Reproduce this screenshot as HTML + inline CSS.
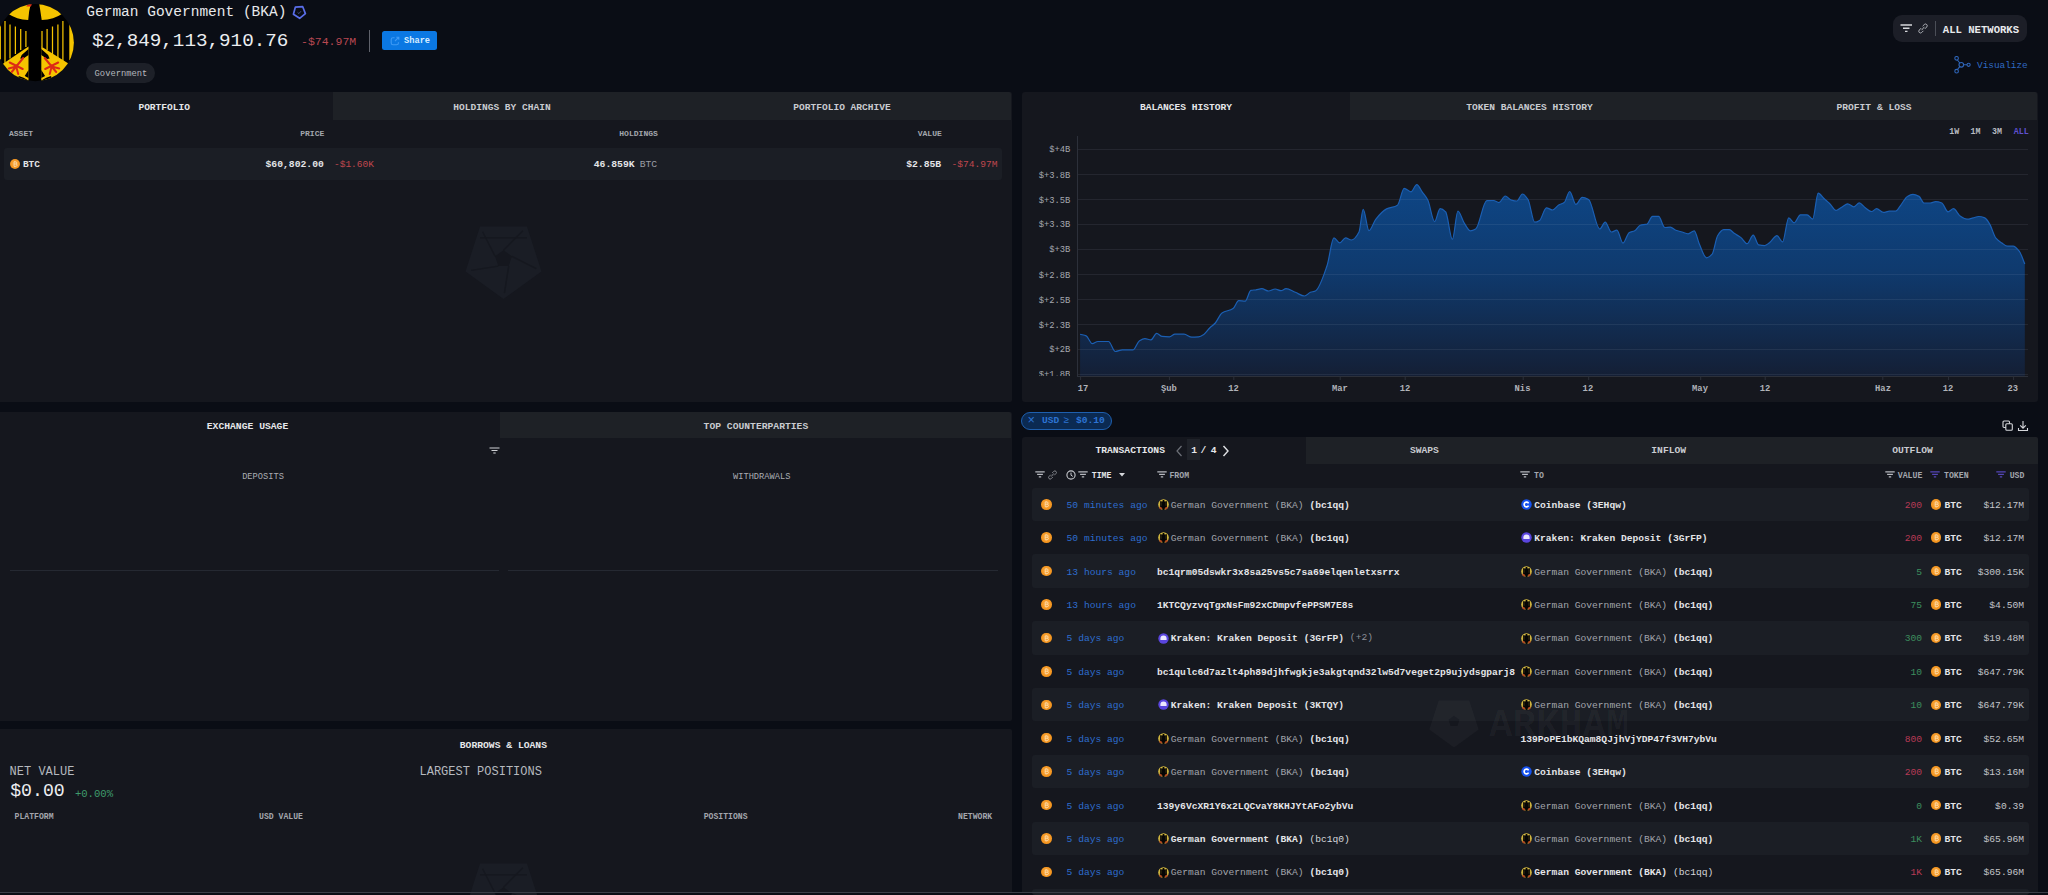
<!DOCTYPE html>
<html><head><meta charset="utf-8"><title>German Government (BKA)</title>
<style>
html,body{margin:0;padding:0}
body{width:2048px;height:895px;background:#0a0d15;overflow:hidden;position:relative;font-family:"Liberation Mono",monospace;-webkit-font-smoothing:antialiased}
.a{position:absolute;white-space:nowrap}
b{font-weight:700}
.w{color:#e4e5e8}
.g{color:#a3a6ad;font-weight:400}
.g3{color:#d6d8dc;font-weight:400}
.g2{color:#8d9098;font-weight:400;position:relative;top:-1.5px}
.btc{border-radius:50%;background:radial-gradient(circle at 50% 45%,#f9ad48 0,#f4951f 62%,#d97f10 100%)}
.btc svg{position:absolute;left:0;top:0;width:100%;height:100%}
.ic{display:inline-block;width:10.5px;height:10.5px;border-radius:50%}
.gov{background:radial-gradient(circle at 50% 55%,#000 0,#000 38%,#e8c21a 42%,#e0b000 70%,#2a2000 100%)}
.cb{background:#1552ef;box-shadow:inset 0 0 0 2px #1552ef, inset 0 0 0 4px #fff}
.kr{background:radial-gradient(circle at 50% 40%,#e8e4ff 0,#d9d2ff 30%,#5b45e0 48%,#4a36c8 100%)}
</style></head>
<body>
<svg class="a" style="left:0px;top:0px" width="80" height="90" viewBox="0 0 80 90">
<defs><clipPath id="lc"><circle cx="36.6" cy="42.7" r="38.6"/></clipPath></defs>
<g transform="translate(-1.3,0)"><g clip-path="url(#lc)">
<rect x="-5" y="0" width="90" height="90" fill="#000"/>
<path d="M9 13.5 Q18 19.5 29.5 20 L30.5 11 L32 4.5 L31.5 0 L-5 0 Z" fill="#f5c400"/>
<path d="M64 13.5 Q55 19.5 43 20 L41.5 10 L40.5 4 L40 0 L80 0 Z" fill="#f5c400"/>
<path d="M-5 0 L9 0 L9 13.5 Q4 10 -5 8 Z" fill="#000"/>
<path d="M80 0 L64 0 L64 13.5 Q70 10 80 8 Z" fill="#000"/>
<path d="M-5 22 L2.2 24 L2.2 60 L-5 64 Z" fill="#f5c400"/>
<path d="M80 22 L70.6 24 L70.6 60 L80 64 Z" fill="#f5c400"/>
<path d="M-5 70 L29.8 46.5 L29.8 90 L-5 90 Z" fill="#f5c400"/>
<path d="M80 70 L42.6 46.5 L42.6 90 L80 90 Z" fill="#f5c400"/>
<path d="M29.8 49 L23 55 L21.5 58.5 L24 59 L29.8 55 Z M42.6 49 L49.4 55 L50.9 58.5 L48.4 59 L42.6 55 Z M20 76 Q25 77 29.8 80.5 L29.8 90 L18 90 Z M52.4 76 Q47.4 77 42.6 80.5 L42.6 90 L54.4 90 Z M29.8 70 L26 76 L29.8 78 Z M42.6 70 L46.4 76 L42.6 78 Z" fill="#000"/>
<g stroke="#f5c400" stroke-width="1.25">
<line x1="6.3" y1="21" x2="6.3" y2="63"/><line x1="11.3" y1="24.5" x2="11.3" y2="58.5"/><line x1="16.7" y1="26.5" x2="16.7" y2="54"/><line x1="22" y1="29" x2="22" y2="50"/><line x1="27.2" y1="31" x2="27.2" y2="47"/>
<line x1="43.3" y1="31" x2="43.3" y2="47"/><line x1="48.4" y1="29" x2="48.4" y2="50"/><line x1="53.8" y1="26.5" x2="53.8" y2="54"/><line x1="59.2" y1="24.5" x2="59.2" y2="58.5"/><line x1="64.2" y1="21" x2="64.2" y2="63"/>
</g>
<path d="M27.5 6.5 Q29 3.5 33.5 4 L32 6.5 Z" fill="#e0281a"/>
<g stroke="#dc2a16" stroke-width="2" stroke-linecap="round" fill="none">
<path d="M24.5 58 L17.5 66.5 M11 62.5 L24 69 M17.5 66.5 L13 72 M17.5 66.5 L19.5 74 M17.5 66.5 L10 68.5"/>
<path d="M46 58 L53 66.5 M59.5 62.5 L46.5 69 M53 66.5 L57.5 72 M53 66.5 L51 74 M53 66.5 L60.5 68.5"/>
</g>
</g>
</g>
</svg>
<div class="a" style="top:4.57px;font-size:14.5px;line-height:14.5px;color:#e8e9ec;left:86.30px;">German Government (BKA)</div>
<svg class="a" style="left:292px;top:5px" width="15" height="15" viewBox="0 0 15 15">
<path d="M3.34,2.10 L10.73,1.72 L13.39,8.63 L7.63,13.29 L1.42,9.26 Z" fill="none" stroke="#5a6eea" stroke-width="1.7" stroke-linejoin="round"/>
<path d="M5.6 7.4 L6.9 8.6 L9 6.2" fill="none" stroke="#4b5390" stroke-width="0.9"/>
</svg>
<div class="a" style="top:32.39px;font-size:19.25px;line-height:19.25px;color:#eceef1;left:92.00px;">$2,849,113,910.76</div>
<div class="a" style="top:36.48px;font-size:11.5px;line-height:11.5px;color:#b94852;left:301.00px;">-$74.97M</div>
<div class="a" style="left:369px;top:30px;width:1.40px;height:21.70px;background:#5f626b;"></div>
<div class="a" style="left:382px;top:31.2px;width:54.60px;height:18.50px;background:#0b78e3;border-radius:2.5px;"></div>
<svg class="a" style="left:389.5px;top:35.5px" width="10" height="10" viewBox="0 0 10 10">
<path d="M4.6 1.8 H3 Q1.2 1.8 1.2 3.6 V7 Q1.2 8.8 3 8.8 H6.6 Q8.4 8.8 8.4 7 V6.2" fill="none" stroke="#3f9af5" stroke-width="1.1"/>
<path d="M5 5 L8.6 1.4 M6.3 1.2 H8.8 V3.7" fill="none" stroke="#3f9af5" stroke-width="1.1"/>
</svg>
<div class="a" style="top:36.80px;font-size:8.7px;line-height:8.7px;color:#d6ecff;font-weight:700;left:404.00px;">Share</div>
<div class="a" style="left:86.4px;top:63.3px;width:68.60px;height:19.30px;background:#1d2028;border-radius:10px;"></div>
<div class="a" style="top:69.56px;font-size:8.8px;line-height:8.8px;color:#b5b8be;left:94.60px;">Government</div>
<div class="a" style="left:1893px;top:15.4px;width:134.00px;height:26.20px;background:#1c1e27;border-radius:9px;"></div>
<svg class="a" style="left:1900px;top:24px" width="13" height="9" viewBox="0 0 13 9">
<path d="M0.5 1 H12 M3 4.2 H9.5 M5 7.4 H7.5" stroke="#d6d8dc" stroke-width="1.4"/>
</svg>
<svg class="a" style="left:1918px;top:23px" width="10" height="11" viewBox="0 0 10 11">
<path d="M4.6 3.2 L6.3 1.5 Q7.6 0.4 8.8 1.6 Q9.8 2.8 8.7 4 L6.8 5.9 M5.4 7.8 L3.7 9.5 Q2.4 10.6 1.2 9.4 Q0.2 8.2 1.3 7 L3.2 5.1 M3.6 7.2 L6.4 3.8" fill="none" stroke="#aeb1b7" stroke-width="1"/>
</svg>
<div class="a" style="left:1935px;top:21px;width:1.00px;height:15.00px;background:#4b4e57;"></div>
<div class="a" style="top:24.87px;font-size:10.6px;line-height:10.6px;color:#e9eaed;font-weight:700;left:1942.80px;">ALL NETWORKS</div>
<svg class="a" style="left:1954px;top:56px" width="18" height="18" viewBox="0 0 18 18">
<g fill="none" stroke="#2f65b8" stroke-width="1.1">
<circle cx="2.6" cy="2.3" r="1.8"/><circle cx="2.6" cy="15.2" r="1.8"/><circle cx="7.3" cy="8.8" r="2.3"/><circle cx="14.6" cy="8.8" r="1.6"/>
<path d="M3.4 4 L5.8 7 M3.4 13.5 L5.8 10.6 M9.6 8.8 H13"/>
</g></svg>
<div class="a" style="top:61.19px;font-size:9.4px;line-height:9.4px;color:#2f6ac4;left:1977.00px;">Visualize</div>
<div class="a" style="left:0px;top:92px;width:1011.50px;height:310.00px;background:#15171e;border-radius:0 2px 2px 0;"></div>
<div class="a" style="left:332.6px;top:92px;width:678.90px;height:28.00px;background:#1e2126;border-radius:0 2px 0 0;"></div>
<div class="a" style="top:103.03px;font-size:9.55px;line-height:9.55px;color:#e6e7ea;font-weight:700;left:164.20px;transform:translateX(-50%);">PORTFOLIO</div>
<div class="a" style="top:103.03px;font-size:9.55px;line-height:9.55px;color:#c9cbd0;font-weight:700;left:502.00px;transform:translateX(-50%);">HOLDINGS BY CHAIN</div>
<div class="a" style="top:103.03px;font-size:9.55px;line-height:9.55px;color:#c9cbd0;font-weight:700;left:842.00px;transform:translateX(-50%);">PORTFOLIO ARCHIVE</div>
<div class="a" style="top:129.68px;font-size:8.05px;line-height:8.05px;color:#a3a6ad;font-weight:700;left:8.90px;">ASSET</div>
<div class="a" style="top:129.68px;font-size:8.05px;line-height:8.05px;color:#a3a6ad;font-weight:700;right:1723.70px;">PRICE</div>
<div class="a" style="top:129.68px;font-size:8.05px;line-height:8.05px;color:#a3a6ad;font-weight:700;right:1390.10px;">HOLDINGS</div>
<div class="a" style="top:129.68px;font-size:8.05px;line-height:8.05px;color:#a3a6ad;font-weight:700;right:1106.20px;">VALUE</div>
<div class="a" style="left:4px;top:148px;width:998.00px;height:31.70px;background:#1b1e25;border-radius:3px;"></div>
<div class="a btc" style="left:9.5px;top:158.7px;width:10px;height:10px"><svg viewBox="0 0 10 10"><path d="M4 2.9 H5.7 Q6.8 2.9 6.8 4 Q6.8 4.9 5.9 5 Q7.1 5.1 7.1 6.2 Q7.1 7.3 5.8 7.3 H4 Z M4 5 H5.8 M4.9 2.1 V2.9 M4.9 7.3 V8.1" fill="none" stroke="#ffe6c0" stroke-width="0.9" opacity="0.75"/></svg></div>
<div class="a" style="top:159.67px;font-size:9.45px;line-height:9.45px;color:#e4e5e8;font-weight:700;left:22.90px;">BTC</div>
<div class="a" style="top:159.55px;font-size:9.73px;line-height:9.73px;color:#e4e5e8;font-weight:700;right:1724.20px;">$60,802.00</div>
<div class="a" style="top:159.65px;font-size:9.5px;line-height:9.5px;color:#c0474e;left:334.00px;">-$1.60K</div>
<div class="a" style="top:159.55px;font-size:9.73px;line-height:9.73px;color:#e4e5e8;font-weight:700;right:1413.40px;">46.859K</div>
<div class="a" style="top:159.55px;font-size:9.73px;line-height:9.73px;color:#9a9da4;right:1390.80px;">BTC</div>
<div class="a" style="top:159.55px;font-size:9.73px;line-height:9.73px;color:#e4e5e8;font-weight:700;right:1106.80px;">$2.85B</div>
<div class="a" style="top:159.63px;font-size:9.55px;line-height:9.55px;color:#c0474e;right:1050.60px;">-$74.97M</div>
<svg class="a" style="left:0;top:0;" width="2048" height="895" viewBox="0 0 2048 895"><path d="M480.0,226.6 L527.0,226.6 L541.5,271.4 L503.5,299.0 L465.5,271.4 Z M503.5,250.2 L511.9,256.3 L508.7,266.1 L498.3,266.1 L495.1,256.3 Z" fill="#1a1d25" fill-rule="evenodd"/><path d="M503.5,250.2 L522.9,230.8 M511.9,256.3 L536.3,268.7 M508.7,266.1 L504.4,293.2 M498.3,266.1 L471.2,270.4 M495.1,256.3 L482.6,231.8 " stroke="#15171e" stroke-width="1.4" opacity="0.8"/><path d="M480.0,237.8 H527.0" stroke="#15171e" stroke-width="1.4" opacity="0.8"/></svg>
<div class="a" style="left:0px;top:411.8px;width:1011.50px;height:309.00px;background:#15171e;border-radius:0 2px 2px 0;"></div>
<div class="a" style="left:499.7px;top:411.8px;width:511.80px;height:26.70px;background:#1e2126;border-radius:0 2px 0 0;"></div>
<div class="a" style="top:421.96px;font-size:9.7px;line-height:9.7px;color:#e6e7ea;font-weight:700;left:247.50px;transform:translateX(-50%);">EXCHANGE USAGE</div>
<div class="a" style="top:421.96px;font-size:9.7px;line-height:9.7px;color:#c9cbd0;font-weight:700;left:755.90px;transform:translateX(-50%);">TOP COUNTERPARTIES</div>
<svg class="a" style="left:488.5px;top:446.8px" width="11" height="7" viewBox="0 0 11 7">
<path d="M0.5 1 H10.5 M2.5 3.5 H8.5 M4.3 6 H6.7" stroke="#cfd1d5" stroke-width="1.2"/>
</svg>
<div class="a" style="top:472.50px;font-size:8.7px;line-height:8.7px;color:#a9acb2;left:263.00px;transform:translateX(-50%);">DEPOSITS</div>
<div class="a" style="top:472.50px;font-size:8.7px;line-height:8.7px;color:#a9acb2;left:761.70px;transform:translateX(-50%);">WITHDRAWALS</div>
<div class="a" style="left:9.6px;top:570.3px;width:489.40px;height:1.00px;background:#252932;"></div>
<div class="a" style="left:508px;top:570.3px;width:490.00px;height:1.00px;background:#252932;"></div>
<div class="a" style="left:0px;top:729.3px;width:1011.50px;height:162.70px;background:#15171e;border-radius:0 2px 0 0;"></div>
<div class="a" style="top:740.96px;font-size:9.7px;line-height:9.7px;color:#e6e7ea;font-weight:700;left:503.40px;transform:translateX(-50%);">BORROWS &amp; LOANS</div>
<div class="a" style="top:765.86px;font-size:12px;line-height:12px;color:#b6b9bf;left:9.60px;">NET VALUE</div>
<div class="a" style="top:782.25px;font-size:18.2px;line-height:18.2px;color:#eceef1;left:10.20px;">$0.00</div>
<div class="a" style="top:788.77px;font-size:10.6px;line-height:10.6px;color:#3f9c6c;left:74.90px;">+0.00%</div>
<div class="a" style="top:765.86px;font-size:12px;line-height:12px;color:#b6b9bf;left:419.50px;">LARGEST POSITIONS</div>
<div class="a" style="top:813.24px;font-size:8.15px;line-height:8.15px;color:#a3a6ad;font-weight:700;left:14.50px;">PLATFORM</div>
<div class="a" style="top:813.24px;font-size:8.15px;line-height:8.15px;color:#a3a6ad;font-weight:700;left:259.00px;">USD VALUE</div>
<div class="a" style="top:813.24px;font-size:8.15px;line-height:8.15px;color:#a3a6ad;font-weight:700;left:703.70px;">POSITIONS</div>
<div class="a" style="top:813.24px;font-size:8.15px;line-height:8.15px;color:#a3a6ad;font-weight:700;left:958.00px;">NETWORK</div>
<svg class="a" style="left:0;top:0;" width="2048" height="895" viewBox="0 0 2048 895"><path d="M480.0,863.6 L527.0,863.6 L541.5,908.4 L503.5,936.0 L465.5,908.4 Z M503.5,887.2 L511.9,893.3 L508.7,903.1 L498.3,903.1 L495.1,893.3 Z" fill="#1a1d25" fill-rule="evenodd"/><path d="M503.5,887.2 L522.9,867.8 M511.9,893.3 L536.3,905.7 M508.7,903.1 L504.4,930.2 M498.3,903.1 L471.2,907.4 M495.1,893.3 L482.6,868.8 " stroke="#15171e" stroke-width="1.4" opacity="0.8"/><path d="M480.0,874.8 H527.0" stroke="#15171e" stroke-width="1.4" opacity="0.8"/></svg>
<div class="a" style="left:1022px;top:92px;width:1015.50px;height:309.50px;background:#15171e;border-radius:3px;"></div>
<div class="a" style="left:1349.8px;top:92px;width:687.70px;height:28.00px;background:#1e2126;border-radius:0 2px 0 0;"></div>
<div class="a" style="top:103.01px;font-size:9.6px;line-height:9.6px;color:#e6e7ea;font-weight:700;left:1186.00px;transform:translateX(-50%);">BALANCES HISTORY</div>
<div class="a" style="top:103.01px;font-size:9.6px;line-height:9.6px;color:#c9cbd0;font-weight:700;left:1529.50px;transform:translateX(-50%);">TOKEN BALANCES HISTORY</div>
<div class="a" style="top:103.01px;font-size:9.6px;line-height:9.6px;color:#c9cbd0;font-weight:700;left:1874.00px;transform:translateX(-50%);">PROFIT &amp; LOSS</div>
<div class="a" style="top:128.37px;font-size:8.3px;line-height:8.3px;color:#b9bcc2;font-weight:700;left:1949.30px;">1W</div>
<div class="a" style="top:128.37px;font-size:8.3px;line-height:8.3px;color:#b9bcc2;font-weight:700;left:1970.60px;">1M</div>
<div class="a" style="top:128.37px;font-size:8.3px;line-height:8.3px;color:#b9bcc2;font-weight:700;left:1992.00px;">3M</div>
<div class="a" style="top:128.37px;font-size:8.3px;line-height:8.3px;color:#5f50cf;font-weight:700;left:2013.80px;">ALL</div>
<svg class="a" style="left:1022px;top:120px" width="1016" height="282" viewBox="1022 120 1016 282">
<defs><linearGradient id="gf" x1="0" y1="184" x2="0" y2="376" gradientUnits="userSpaceOnUse">
<stop offset="0" stop-color="#0e4686"/><stop offset="0.45" stop-color="#0f3a6e"/><stop offset="1" stop-color="#141f35"/></linearGradient></defs>
<path d="M1080.1,334.2 C1082.1,334.8 1084.2,335.0 1086.2,335.9 C1088.2,336.8 1090.3,343.7 1092.3,343.7 C1094.2,343.7 1096.0,341.5 1097.9,341.5 C1101.4,341.5 1105.0,341.5 1108.5,341.5 C1110.8,341.5 1113.0,351.5 1115.3,351.5 C1117.7,351.5 1120.1,349.8 1122.5,349.8 C1126.0,349.8 1129.6,349.8 1133.1,349.8 C1135.2,349.8 1137.2,342.2 1139.3,340.9 C1141.2,339.8 1143.0,338.7 1144.9,338.7 C1146.9,338.7 1149.0,339.8 1151.0,339.8 C1152.9,339.8 1154.7,333.4 1156.6,333.4 C1158.5,333.4 1160.3,336.2 1162.2,336.4 C1164.6,336.7 1167.0,336.8 1169.4,336.8 C1171.3,336.8 1173.1,334.2 1175.0,334.2 C1178.0,334.2 1181.0,334.2 1184.0,334.2 C1186.6,334.2 1189.2,337.2 1191.8,337.2 C1194.0,337.2 1196.3,337.0 1198.5,336.8 C1200.4,336.6 1202.2,335.4 1204.1,334.2 C1206.0,333.0 1207.8,329.8 1209.7,328.0 C1211.6,326.2 1213.4,325.1 1215.3,323.0 C1217.5,320.5 1219.8,314.5 1222.0,313.0 C1225.7,310.5 1229.4,311.0 1233.1,308.5 C1235.0,307.3 1236.8,300.7 1238.7,300.7 C1240.9,300.7 1243.0,301.1 1245.2,301.1 C1247.1,301.1 1249.0,290.7 1250.9,290.3 C1252.6,290.0 1254.2,290.0 1255.9,289.8 C1257.9,289.5 1259.8,288.7 1261.8,288.7 C1264.0,288.7 1266.3,291.0 1268.5,291.0 C1270.7,291.0 1273.0,289.0 1275.2,289.0 C1277.1,289.0 1279.1,290.7 1281.0,290.7 C1282.7,290.7 1284.3,288.7 1286.0,288.7 C1289.1,288.7 1292.2,291.1 1295.3,292.3 C1298.4,293.5 1301.4,296.0 1304.5,296.0 C1306.5,296.0 1308.4,293.0 1310.4,292.3 C1312.1,291.7 1313.7,291.7 1315.4,291.0 C1319.3,289.4 1323.2,276.9 1327.1,265.5 C1329.4,258.9 1331.6,237.9 1333.9,237.9 C1335.8,237.9 1337.8,242.9 1339.7,242.9 C1341.7,242.9 1343.6,237.9 1345.6,237.9 C1347.5,237.9 1349.5,240.0 1351.4,240.0 C1353.9,240.0 1356.5,236.8 1359.0,232.0 C1360.4,229.4 1361.8,209.4 1363.2,209.4 C1365.1,209.4 1367.1,230.7 1369.0,230.7 C1371.2,230.7 1373.5,222.2 1375.7,219.4 C1379.3,214.8 1383.0,210.7 1386.6,208.9 C1390.2,207.1 1393.9,207.5 1397.5,205.2 C1399.7,203.8 1402.0,188.4 1404.2,188.4 C1406.4,188.4 1408.7,191.8 1410.9,191.8 C1412.9,191.8 1414.8,184.6 1416.8,184.6 C1418.6,184.6 1420.5,189.5 1422.3,192.1 C1424.1,194.7 1426.0,196.5 1427.8,200.1 C1430.1,204.6 1432.3,221.6 1434.6,221.6 C1436.4,221.6 1438.3,208.7 1440.1,208.7 C1441.9,208.7 1443.8,210.0 1445.6,211.8 C1447.9,214.0 1450.1,239.4 1452.4,239.4 C1454.2,239.4 1456.1,211.2 1457.9,211.2 C1460.0,211.2 1462.0,219.6 1464.1,222.8 C1466.1,225.9 1468.2,230.8 1470.2,230.8 C1472.0,230.8 1473.9,230.0 1475.7,229.0 C1479.4,227.0 1483.1,200.9 1486.8,200.7 C1489.0,200.6 1491.3,200.5 1493.5,200.5 C1495.3,200.5 1497.2,202.6 1499.0,202.6 C1501.1,202.6 1503.1,196.0 1505.2,196.0 C1507.3,196.0 1509.3,199.6 1511.4,200.1 C1513.2,200.6 1515.1,201.0 1516.9,201.0 C1518.7,201.0 1520.6,194.0 1522.4,194.0 C1524.3,194.0 1526.1,196.7 1528.0,199.5 C1530.2,202.8 1532.5,222.2 1534.7,222.2 C1536.3,222.2 1538.0,221.4 1539.6,220.4 C1541.9,219.1 1544.1,207.8 1546.4,207.8 C1548.4,207.8 1550.5,210.0 1552.5,210.0 C1554.6,210.0 1556.6,206.2 1558.7,205.0 C1560.5,204.0 1562.4,203.9 1564.2,202.6 C1566.0,201.3 1567.9,191.5 1569.7,191.5 C1571.8,191.5 1573.8,204.4 1575.9,204.4 C1578.0,204.4 1580.1,197.3 1582.2,197.3 C1584.3,197.3 1586.5,198.3 1588.6,199.5 C1592.3,201.6 1596.0,229.0 1599.7,229.0 C1601.5,229.0 1603.4,222.2 1605.2,222.2 C1607.2,222.2 1609.3,232.0 1611.3,232.0 C1613.2,232.0 1615.0,230.2 1616.9,230.2 C1618.9,230.2 1621.0,243.1 1623.0,243.1 C1625.0,243.1 1627.1,233.8 1629.1,232.7 C1631.0,231.7 1632.8,231.7 1634.7,230.8 C1636.5,229.9 1638.4,225.9 1640.2,225.3 C1642.5,224.6 1644.7,224.8 1647.0,224.1 C1648.8,223.5 1650.7,216.4 1652.5,216.4 C1654.5,216.4 1656.6,216.4 1658.6,216.4 C1660.7,216.4 1662.7,227.5 1664.8,227.5 C1666.6,227.5 1668.5,227.1 1670.3,227.1 C1672.1,227.1 1674.0,229.5 1675.8,230.2 C1677.9,231.0 1679.9,231.4 1682.0,232.0 C1684.0,232.6 1686.1,233.9 1688.1,233.9 C1690.2,233.9 1692.2,230.8 1694.3,230.8 C1695.9,230.8 1697.6,240.0 1699.2,243.7 C1701.6,249.2 1704.1,257.8 1706.5,257.8 C1708.4,257.8 1710.2,256.2 1712.1,254.2 C1713.9,252.2 1715.8,238.6 1717.6,235.7 C1719.6,232.5 1721.7,229.6 1723.7,229.6 C1725.6,229.6 1727.4,229.6 1729.3,229.6 C1730.9,229.6 1732.6,232.2 1734.2,233.3 C1736.5,234.9 1738.7,235.8 1741.0,237.6 C1743.0,239.2 1745.1,243.7 1747.1,243.7 C1749.1,243.7 1751.2,235.1 1753.2,235.1 C1755.0,235.1 1756.8,244.5 1758.6,244.9 C1760.6,245.3 1762.7,245.6 1764.7,245.6 C1766.4,245.6 1768.0,243.7 1769.7,242.5 C1772.1,240.7 1774.6,235.7 1777.0,235.7 C1778.9,235.7 1780.7,241.9 1782.6,241.9 C1784.6,241.9 1786.7,217.9 1788.7,217.9 C1790.5,217.9 1792.4,222.8 1794.2,222.8 C1796.3,222.8 1798.3,214.8 1800.4,214.8 C1802.6,214.8 1804.9,214.8 1807.1,214.8 C1809.0,214.8 1810.8,219.1 1812.7,219.1 C1814.5,219.1 1816.4,193.1 1818.2,193.1 C1820.0,193.1 1821.9,196.6 1823.7,198.3 C1825.8,200.2 1827.8,201.8 1829.9,203.8 C1831.9,205.8 1834.0,210.5 1836.0,210.5 C1838.0,210.5 1840.1,208.1 1842.1,206.9 C1844.0,205.8 1845.8,203.8 1847.7,203.8 C1849.7,203.8 1851.8,206.9 1853.8,206.9 C1855.6,206.9 1857.5,202.9 1859.3,202.9 C1861.2,202.9 1863.0,206.2 1864.9,207.5 C1867.1,209.1 1869.4,211.5 1871.6,211.5 C1873.3,211.5 1874.9,208.7 1876.6,208.7 C1878.8,208.7 1881.1,212.4 1883.3,212.4 C1885.4,212.4 1887.4,211.2 1889.5,211.2 C1891.5,211.2 1893.6,211.2 1895.6,211.2 C1897.2,211.2 1898.9,207.6 1900.5,205.6 C1902.8,202.8 1905.1,197.7 1907.4,196.4 C1909.2,195.3 1911.1,194.3 1912.9,194.3 C1914.9,194.3 1917.0,195.3 1919.0,196.4 C1920.7,197.3 1922.3,203.0 1924.0,203.0 C1926.0,203.0 1928.1,203.0 1930.1,203.0 C1931.9,203.0 1933.8,201.7 1935.6,201.7 C1937.7,201.7 1939.7,202.2 1941.8,203.0 C1943.9,203.8 1945.9,211.8 1948.0,211.8 C1949.8,211.8 1951.7,208.7 1953.5,208.7 C1955.7,208.7 1958.0,214.7 1960.2,216.1 C1962.5,217.6 1964.7,219.2 1967.0,219.2 C1969.0,219.2 1971.1,218.4 1973.1,217.9 C1975.0,217.5 1976.8,216.5 1978.7,216.5 C1980.7,216.5 1982.8,217.1 1984.8,217.9 C1986.4,218.6 1988.1,221.5 1989.7,224.1 C1991.8,227.4 1993.8,235.7 1995.9,238.2 C1997.9,240.6 2000.0,241.8 2002.0,243.1 C2003.8,244.3 2005.7,246.2 2007.5,246.2 C2009.4,246.2 2011.2,246.2 2013.1,246.2 C2015.1,246.2 2017.2,248.7 2019.2,251.1 C2021.1,253.3 2022.9,259.7 2024.8,264.0 L2024.8,376 L1080.1,376 Z" fill="url(#gf)"/>
<g stroke="rgba(190,200,220,0.09)" stroke-width="1"><line x1="1077" y1="149.5" x2="2028" y2="149.5"/><line x1="1077" y1="174.5" x2="2028" y2="174.5"/><line x1="1077" y1="199.5" x2="2028" y2="199.5"/><line x1="1077" y1="224.5" x2="2028" y2="224.5"/><line x1="1077" y1="249.5" x2="2028" y2="249.5"/><line x1="1077" y1="274.5" x2="2028" y2="274.5"/><line x1="1077" y1="299.5" x2="2028" y2="299.5"/><line x1="1077" y1="324.5" x2="2028" y2="324.5"/><line x1="1077" y1="349.5" x2="2028" y2="349.5"/><line x1="1077" y1="374.5" x2="2028" y2="374.5"/></g>
<path d="M1080.1,334.2 C1082.1,334.8 1084.2,335.0 1086.2,335.9 C1088.2,336.8 1090.3,343.7 1092.3,343.7 C1094.2,343.7 1096.0,341.5 1097.9,341.5 C1101.4,341.5 1105.0,341.5 1108.5,341.5 C1110.8,341.5 1113.0,351.5 1115.3,351.5 C1117.7,351.5 1120.1,349.8 1122.5,349.8 C1126.0,349.8 1129.6,349.8 1133.1,349.8 C1135.2,349.8 1137.2,342.2 1139.3,340.9 C1141.2,339.8 1143.0,338.7 1144.9,338.7 C1146.9,338.7 1149.0,339.8 1151.0,339.8 C1152.9,339.8 1154.7,333.4 1156.6,333.4 C1158.5,333.4 1160.3,336.2 1162.2,336.4 C1164.6,336.7 1167.0,336.8 1169.4,336.8 C1171.3,336.8 1173.1,334.2 1175.0,334.2 C1178.0,334.2 1181.0,334.2 1184.0,334.2 C1186.6,334.2 1189.2,337.2 1191.8,337.2 C1194.0,337.2 1196.3,337.0 1198.5,336.8 C1200.4,336.6 1202.2,335.4 1204.1,334.2 C1206.0,333.0 1207.8,329.8 1209.7,328.0 C1211.6,326.2 1213.4,325.1 1215.3,323.0 C1217.5,320.5 1219.8,314.5 1222.0,313.0 C1225.7,310.5 1229.4,311.0 1233.1,308.5 C1235.0,307.3 1236.8,300.7 1238.7,300.7 C1240.9,300.7 1243.0,301.1 1245.2,301.1 C1247.1,301.1 1249.0,290.7 1250.9,290.3 C1252.6,290.0 1254.2,290.0 1255.9,289.8 C1257.9,289.5 1259.8,288.7 1261.8,288.7 C1264.0,288.7 1266.3,291.0 1268.5,291.0 C1270.7,291.0 1273.0,289.0 1275.2,289.0 C1277.1,289.0 1279.1,290.7 1281.0,290.7 C1282.7,290.7 1284.3,288.7 1286.0,288.7 C1289.1,288.7 1292.2,291.1 1295.3,292.3 C1298.4,293.5 1301.4,296.0 1304.5,296.0 C1306.5,296.0 1308.4,293.0 1310.4,292.3 C1312.1,291.7 1313.7,291.7 1315.4,291.0 C1319.3,289.4 1323.2,276.9 1327.1,265.5 C1329.4,258.9 1331.6,237.9 1333.9,237.9 C1335.8,237.9 1337.8,242.9 1339.7,242.9 C1341.7,242.9 1343.6,237.9 1345.6,237.9 C1347.5,237.9 1349.5,240.0 1351.4,240.0 C1353.9,240.0 1356.5,236.8 1359.0,232.0 C1360.4,229.4 1361.8,209.4 1363.2,209.4 C1365.1,209.4 1367.1,230.7 1369.0,230.7 C1371.2,230.7 1373.5,222.2 1375.7,219.4 C1379.3,214.8 1383.0,210.7 1386.6,208.9 C1390.2,207.1 1393.9,207.5 1397.5,205.2 C1399.7,203.8 1402.0,188.4 1404.2,188.4 C1406.4,188.4 1408.7,191.8 1410.9,191.8 C1412.9,191.8 1414.8,184.6 1416.8,184.6 C1418.6,184.6 1420.5,189.5 1422.3,192.1 C1424.1,194.7 1426.0,196.5 1427.8,200.1 C1430.1,204.6 1432.3,221.6 1434.6,221.6 C1436.4,221.6 1438.3,208.7 1440.1,208.7 C1441.9,208.7 1443.8,210.0 1445.6,211.8 C1447.9,214.0 1450.1,239.4 1452.4,239.4 C1454.2,239.4 1456.1,211.2 1457.9,211.2 C1460.0,211.2 1462.0,219.6 1464.1,222.8 C1466.1,225.9 1468.2,230.8 1470.2,230.8 C1472.0,230.8 1473.9,230.0 1475.7,229.0 C1479.4,227.0 1483.1,200.9 1486.8,200.7 C1489.0,200.6 1491.3,200.5 1493.5,200.5 C1495.3,200.5 1497.2,202.6 1499.0,202.6 C1501.1,202.6 1503.1,196.0 1505.2,196.0 C1507.3,196.0 1509.3,199.6 1511.4,200.1 C1513.2,200.6 1515.1,201.0 1516.9,201.0 C1518.7,201.0 1520.6,194.0 1522.4,194.0 C1524.3,194.0 1526.1,196.7 1528.0,199.5 C1530.2,202.8 1532.5,222.2 1534.7,222.2 C1536.3,222.2 1538.0,221.4 1539.6,220.4 C1541.9,219.1 1544.1,207.8 1546.4,207.8 C1548.4,207.8 1550.5,210.0 1552.5,210.0 C1554.6,210.0 1556.6,206.2 1558.7,205.0 C1560.5,204.0 1562.4,203.9 1564.2,202.6 C1566.0,201.3 1567.9,191.5 1569.7,191.5 C1571.8,191.5 1573.8,204.4 1575.9,204.4 C1578.0,204.4 1580.1,197.3 1582.2,197.3 C1584.3,197.3 1586.5,198.3 1588.6,199.5 C1592.3,201.6 1596.0,229.0 1599.7,229.0 C1601.5,229.0 1603.4,222.2 1605.2,222.2 C1607.2,222.2 1609.3,232.0 1611.3,232.0 C1613.2,232.0 1615.0,230.2 1616.9,230.2 C1618.9,230.2 1621.0,243.1 1623.0,243.1 C1625.0,243.1 1627.1,233.8 1629.1,232.7 C1631.0,231.7 1632.8,231.7 1634.7,230.8 C1636.5,229.9 1638.4,225.9 1640.2,225.3 C1642.5,224.6 1644.7,224.8 1647.0,224.1 C1648.8,223.5 1650.7,216.4 1652.5,216.4 C1654.5,216.4 1656.6,216.4 1658.6,216.4 C1660.7,216.4 1662.7,227.5 1664.8,227.5 C1666.6,227.5 1668.5,227.1 1670.3,227.1 C1672.1,227.1 1674.0,229.5 1675.8,230.2 C1677.9,231.0 1679.9,231.4 1682.0,232.0 C1684.0,232.6 1686.1,233.9 1688.1,233.9 C1690.2,233.9 1692.2,230.8 1694.3,230.8 C1695.9,230.8 1697.6,240.0 1699.2,243.7 C1701.6,249.2 1704.1,257.8 1706.5,257.8 C1708.4,257.8 1710.2,256.2 1712.1,254.2 C1713.9,252.2 1715.8,238.6 1717.6,235.7 C1719.6,232.5 1721.7,229.6 1723.7,229.6 C1725.6,229.6 1727.4,229.6 1729.3,229.6 C1730.9,229.6 1732.6,232.2 1734.2,233.3 C1736.5,234.9 1738.7,235.8 1741.0,237.6 C1743.0,239.2 1745.1,243.7 1747.1,243.7 C1749.1,243.7 1751.2,235.1 1753.2,235.1 C1755.0,235.1 1756.8,244.5 1758.6,244.9 C1760.6,245.3 1762.7,245.6 1764.7,245.6 C1766.4,245.6 1768.0,243.7 1769.7,242.5 C1772.1,240.7 1774.6,235.7 1777.0,235.7 C1778.9,235.7 1780.7,241.9 1782.6,241.9 C1784.6,241.9 1786.7,217.9 1788.7,217.9 C1790.5,217.9 1792.4,222.8 1794.2,222.8 C1796.3,222.8 1798.3,214.8 1800.4,214.8 C1802.6,214.8 1804.9,214.8 1807.1,214.8 C1809.0,214.8 1810.8,219.1 1812.7,219.1 C1814.5,219.1 1816.4,193.1 1818.2,193.1 C1820.0,193.1 1821.9,196.6 1823.7,198.3 C1825.8,200.2 1827.8,201.8 1829.9,203.8 C1831.9,205.8 1834.0,210.5 1836.0,210.5 C1838.0,210.5 1840.1,208.1 1842.1,206.9 C1844.0,205.8 1845.8,203.8 1847.7,203.8 C1849.7,203.8 1851.8,206.9 1853.8,206.9 C1855.6,206.9 1857.5,202.9 1859.3,202.9 C1861.2,202.9 1863.0,206.2 1864.9,207.5 C1867.1,209.1 1869.4,211.5 1871.6,211.5 C1873.3,211.5 1874.9,208.7 1876.6,208.7 C1878.8,208.7 1881.1,212.4 1883.3,212.4 C1885.4,212.4 1887.4,211.2 1889.5,211.2 C1891.5,211.2 1893.6,211.2 1895.6,211.2 C1897.2,211.2 1898.9,207.6 1900.5,205.6 C1902.8,202.8 1905.1,197.7 1907.4,196.4 C1909.2,195.3 1911.1,194.3 1912.9,194.3 C1914.9,194.3 1917.0,195.3 1919.0,196.4 C1920.7,197.3 1922.3,203.0 1924.0,203.0 C1926.0,203.0 1928.1,203.0 1930.1,203.0 C1931.9,203.0 1933.8,201.7 1935.6,201.7 C1937.7,201.7 1939.7,202.2 1941.8,203.0 C1943.9,203.8 1945.9,211.8 1948.0,211.8 C1949.8,211.8 1951.7,208.7 1953.5,208.7 C1955.7,208.7 1958.0,214.7 1960.2,216.1 C1962.5,217.6 1964.7,219.2 1967.0,219.2 C1969.0,219.2 1971.1,218.4 1973.1,217.9 C1975.0,217.5 1976.8,216.5 1978.7,216.5 C1980.7,216.5 1982.8,217.1 1984.8,217.9 C1986.4,218.6 1988.1,221.5 1989.7,224.1 C1991.8,227.4 1993.8,235.7 1995.9,238.2 C1997.9,240.6 2000.0,241.8 2002.0,243.1 C2003.8,244.3 2005.7,246.2 2007.5,246.2 C2009.4,246.2 2011.2,246.2 2013.1,246.2 C2015.1,246.2 2017.2,248.7 2019.2,251.1 C2021.1,253.3 2022.9,259.7 2024.8,264.0" fill="none" stroke="#1b5fb3" stroke-width="1.2" stroke-linejoin="round"/>
<g stroke="#2c303a" stroke-width="1"><line x1="1077.5" y1="136" x2="1077.5" y2="376.5"/><line x1="1077" y1="376.5" x2="2028" y2="376.5"/><line x1="1080.6" y1="376" x2="1080.6" y2="380"/><line x1="1169.4" y1="376" x2="1169.4" y2="380"/><line x1="1233.8" y1="376" x2="1233.8" y2="380"/><line x1="1340.2" y1="376" x2="1340.2" y2="380"/><line x1="1405.2" y1="376" x2="1405.2" y2="380"/><line x1="1523.2" y1="376" x2="1523.2" y2="380"/><line x1="1588.7" y1="376" x2="1588.7" y2="380"/><line x1="1700.7" y1="376" x2="1700.7" y2="380"/><line x1="1765.2" y1="376" x2="1765.2" y2="380"/><line x1="1882.8" y1="376" x2="1882.8" y2="380"/><line x1="1948.6" y1="376" x2="1948.6" y2="380"/><line x1="2013.6" y1="376" x2="2013.6" y2="380"/></g>
</svg>
<div class="a" style="top:146.46px;font-size:8.8px;line-height:8.8px;color:#a4a7ae;right:977.70px;">$+4B</div>
<div class="a" style="top:171.56px;font-size:8.8px;line-height:8.8px;color:#a4a7ae;right:977.70px;">$+3.8B</div>
<div class="a" style="top:196.56px;font-size:8.8px;line-height:8.8px;color:#a4a7ae;right:977.70px;">$+3.5B</div>
<div class="a" style="top:221.46px;font-size:8.8px;line-height:8.8px;color:#a4a7ae;right:977.70px;">$+3.3B</div>
<div class="a" style="top:246.36px;font-size:8.8px;line-height:8.8px;color:#a4a7ae;right:977.70px;">$+3B</div>
<div class="a" style="top:271.56px;font-size:8.8px;line-height:8.8px;color:#a4a7ae;right:977.70px;">$+2.8B</div>
<div class="a" style="top:296.76px;font-size:8.8px;line-height:8.8px;color:#a4a7ae;right:977.70px;">$+2.5B</div>
<div class="a" style="top:321.66px;font-size:8.8px;line-height:8.8px;color:#a4a7ae;right:977.70px;">$+2.3B</div>
<div class="a" style="top:345.96px;font-size:8.8px;line-height:8.8px;color:#a4a7ae;right:977.70px;">$+2B</div>
<div class="a" style="top:370.56px;font-size:8.8px;line-height:8.8px;color:#a4a7ae;right:977.70px;height:5.3px;overflow:hidden;">$+1.8B</div>
<div class="a" style="top:384.76px;font-size:8.8px;line-height:8.8px;color:#b0b3b9;font-weight:700;left:1083.00px;transform:translateX(-50%);">17</div>
<div class="a" style="top:384.76px;font-size:8.8px;line-height:8.8px;color:#b0b3b9;font-weight:700;left:1168.90px;transform:translateX(-50%);">Şub</div>
<div class="a" style="top:384.76px;font-size:8.8px;line-height:8.8px;color:#b0b3b9;font-weight:700;left:1233.50px;transform:translateX(-50%);">12</div>
<div class="a" style="top:384.76px;font-size:8.8px;line-height:8.8px;color:#b0b3b9;font-weight:700;left:1339.90px;transform:translateX(-50%);">Mar</div>
<div class="a" style="top:384.76px;font-size:8.8px;line-height:8.8px;color:#b0b3b9;font-weight:700;left:1405.00px;transform:translateX(-50%);">12</div>
<div class="a" style="top:384.76px;font-size:8.8px;line-height:8.8px;color:#b0b3b9;font-weight:700;left:1522.50px;transform:translateX(-50%);">Nis</div>
<div class="a" style="top:384.76px;font-size:8.8px;line-height:8.8px;color:#b0b3b9;font-weight:700;left:1587.90px;transform:translateX(-50%);">12</div>
<div class="a" style="top:384.76px;font-size:8.8px;line-height:8.8px;color:#b0b3b9;font-weight:700;left:1700.00px;transform:translateX(-50%);">May</div>
<div class="a" style="top:384.76px;font-size:8.8px;line-height:8.8px;color:#b0b3b9;font-weight:700;left:1765.00px;transform:translateX(-50%);">12</div>
<div class="a" style="top:384.76px;font-size:8.8px;line-height:8.8px;color:#b0b3b9;font-weight:700;left:1883.00px;transform:translateX(-50%);">Haz</div>
<div class="a" style="top:384.76px;font-size:8.8px;line-height:8.8px;color:#b0b3b9;font-weight:700;left:1948.00px;transform:translateX(-50%);">12</div>
<div class="a" style="top:384.76px;font-size:8.8px;line-height:8.8px;color:#b0b3b9;font-weight:700;left:2012.80px;transform:translateX(-50%);">23</div>
<div class="a" style="left:1021px;top:411.5px;width:90.50px;height:18.00px;background:#0b2a52;border:1.3px solid #1e5fae;border-radius:9px;box-sizing:border-box;"></div>
<div class="a" style="top:415.14px;font-size:12.5px;line-height:12.5px;color:#2d74d4;left:1027.50px;">×</div>
<div class="a" style="top:416.41px;font-size:9.6px;line-height:9.6px;color:#2d74d4;font-weight:700;left:1042.00px;">USD</div>
<div class="a" style="top:416.41px;font-size:9.6px;line-height:9.6px;color:#2d74d4;left:1063.50px;">≥</div>
<div class="a" style="top:416.41px;font-size:9.6px;line-height:9.6px;color:#2d74d4;font-weight:700;left:1076.00px;">$0.10</div>
<svg class="a" style="left:2001.5px;top:419.5px" width="28" height="13" viewBox="0 0 28 13">
<g fill="none" stroke="#d5d7db" stroke-width="1.1">
<rect x="1" y="1" width="6.5" height="6.5" rx="1"/><rect x="3.8" y="3.8" width="6.5" height="6.5" rx="1" fill="#0a0d15"/>
<path d="M21 1 V8 M18.2 5.3 L21 8.1 L23.8 5.3 M16.5 8 V10.5 H25.5 V8"/>
</g></svg>
<div class="a" style="left:1022px;top:436.5px;width:1015.50px;height:455.50px;background:#15171e;border-radius:3px 3px 0 0;"></div>
<div class="a" style="left:1306px;top:436.5px;width:731.50px;height:27.50px;background:#1e2126;border-radius:0 2px 0 0;"></div>
<div class="a" style="top:446.28px;font-size:9.67px;line-height:9.67px;color:#e6e7ea;font-weight:700;left:1095.40px;">TRANSACTIONS</div>
<div class="a" style="left:1187px;top:438.8px;width:13.00px;height:21.20px;background:#1f2229;"></div>
<svg class="a" style="left:1175px;top:445px" width="56" height="12" viewBox="0 0 56 12">
<path d="M6.5 1 L2 6 L6.5 11" fill="none" stroke="#6d7078" stroke-width="1.2"/>
<path d="M48.5 1 L53 6 L48.5 11" fill="none" stroke="#dfe1e4" stroke-width="1.4"/>
</svg>
<div class="a" style="top:446.28px;font-size:9.67px;line-height:9.67px;color:#e6e7ea;font-weight:700;left:1191.20px;">1</div>
<div class="a" style="top:446.28px;font-size:9.67px;line-height:9.67px;color:#e6e7ea;font-weight:700;left:1200.50px;">/</div>
<div class="a" style="top:446.28px;font-size:9.67px;line-height:9.67px;color:#e6e7ea;font-weight:700;left:1210.80px;">4</div>
<div class="a" style="top:446.28px;font-size:9.67px;line-height:9.67px;color:#c9cbd0;font-weight:700;left:1424.40px;transform:translateX(-50%);">SWAPS</div>
<div class="a" style="top:446.28px;font-size:9.67px;line-height:9.67px;color:#c9cbd0;font-weight:700;left:1668.70px;transform:translateX(-50%);">INFLOW</div>
<div class="a" style="top:446.28px;font-size:9.67px;line-height:9.67px;color:#c9cbd0;font-weight:700;left:1912.50px;transform:translateX(-50%);">OUTFLOW</div>
<svg class="a" style="left:1035.2px;top:471.2px" width="10" height="7" viewBox="0 0 10 7"><path d="M0.3 0.8 H9.7 M2.1 3.3 H7.9 M3.8 5.8 H6.2" stroke="#b6b9bf" stroke-width="1.3"/></svg>
<svg class="a" style="left:1047.5px;top:470px" width="9" height="10" viewBox="0 0 9 10"><path d="M4.2 2.9 L5.7 1.4 Q6.9 0.3 8 1.4 Q9 2.5 7.9 3.6 L6.2 5.3 M4.8 7.1 L3.3 8.6 Q2.1 9.7 1 8.6 Q0 7.5 1.1 6.4 L2.8 4.7 M3.2 6.6 L5.8 3.4" fill="none" stroke="#8f9299" stroke-width="0.9"/></svg>
<svg class="a" style="left:1065.8px;top:470px" width="10" height="10" viewBox="0 0 10 10"><circle cx="5" cy="5" r="4.1" fill="none" stroke="#c6c8cd" stroke-width="1.1"/><path d="M5 2.6 V5.2 L6.8 6.4" fill="none" stroke="#c6c8cd" stroke-width="1"/></svg>
<svg class="a" style="left:1078.3px;top:471.2px" width="10" height="7" viewBox="0 0 10 7"><path d="M0.3 0.8 H9.7 M2.1 3.3 H7.9 M3.8 5.8 H6.2" stroke="#b6b9bf" stroke-width="1.3"/></svg>
<div class="a" style="top:472.12px;font-size:8.2px;line-height:8.2px;color:#e6e7ea;font-weight:700;left:1091.80px;">TIME</div>
<svg class="a" style="left:1118.8px;top:473px" width="6" height="4" viewBox="0 0 6 4"><path d="M0 0 H6 L3 3.5 Z" fill="#d6d8dc"/></svg>
<svg class="a" style="left:1156.8px;top:471.2px" width="10" height="7" viewBox="0 0 10 7"><path d="M0.3 0.8 H9.7 M2.1 3.3 H7.9 M3.8 5.8 H6.2" stroke="#b6b9bf" stroke-width="1.3"/></svg>
<div class="a" style="top:472.12px;font-size:8.2px;line-height:8.2px;color:#a3a6ad;font-weight:700;left:1169.40px;">FROM</div>
<svg class="a" style="left:1519.8px;top:471.2px" width="10" height="7" viewBox="0 0 10 7"><path d="M0.3 0.8 H9.7 M2.1 3.3 H7.9 M3.8 5.8 H6.2" stroke="#b6b9bf" stroke-width="1.3"/></svg>
<div class="a" style="top:472.12px;font-size:8.2px;line-height:8.2px;color:#a3a6ad;font-weight:700;left:1534.00px;">TO</div>
<svg class="a" style="left:1884.5px;top:471.2px" width="10" height="7" viewBox="0 0 10 7"><path d="M0.3 0.8 H9.7 M2.1 3.3 H7.9 M3.8 5.8 H6.2" stroke="#b6b9bf" stroke-width="1.3"/></svg>
<div class="a" style="top:472.12px;font-size:8.2px;line-height:8.2px;color:#a3a6ad;font-weight:700;right:125.70px;">VALUE</div>
<svg class="a" style="left:1930.3px;top:471.2px" width="10" height="7" viewBox="0 0 10 7"><path d="M0.3 0.8 H9.7 M2.1 3.3 H7.9 M3.8 5.8 H6.2" stroke="#5446b8" stroke-width="1.3"/></svg>
<div class="a" style="top:472.12px;font-size:8.2px;line-height:8.2px;color:#a3a6ad;font-weight:700;left:1944.00px;">TOKEN</div>
<svg class="a" style="left:1996.1px;top:471.2px" width="10" height="7" viewBox="0 0 10 7"><path d="M0.3 0.8 H9.7 M2.1 3.3 H7.9 M3.8 5.8 H6.2" stroke="#5446b8" stroke-width="1.3"/></svg>
<div class="a" style="top:472.12px;font-size:8.2px;line-height:8.2px;color:#a3a6ad;font-weight:700;right:23.60px;">USD</div>
<div class="a" style="left:1031.5px;top:487.5px;width:997.00px;height:33.42px;background:#1b1e25;border-radius:3px;"></div>
<div class="a btc" style="left:1041.2px;top:499.01px;width:10.5px;height:10.5px"><svg viewBox="0 0 10 10"><path d="M4 2.9 H5.7 Q6.8 2.9 6.8 4 Q6.8 4.9 5.9 5 Q7.1 5.1 7.1 6.2 Q7.1 7.3 5.8 7.3 H4 Z M4 5 H5.8 M4.9 2.1 V2.9 M4.9 7.3 V8.1" fill="none" stroke="#ffe6c0" stroke-width="0.9" opacity="0.75"/></svg></div>
<div class="a" style="top:500.79px;font-size:9.65px;line-height:9.65px;color:#2e6dce;left:1066.60px;">50 minutes ago</div>
<svg class="a" style="left:1157.5px;top:498.91px" width="11" height="11" viewBox="0 0 11 11"><circle cx="5.5" cy="5.5" r="5.3" fill="#d8bc40"/><circle cx="3" cy="8.7" r="1.7" fill="#b04a20"/><circle cx="8" cy="8.7" r="1.7" fill="#b04a20"/><path d="M4.7 1.0 H6.3 L6.5 2.6 L9.0 2.3 L9.1 7.6 L7.0 8.8 L6.4 10.9 H4.6 L4.0 8.8 L1.9 7.6 L2.0 2.3 L4.5 2.6 Z" fill="#050505"/><path d="M3 3.2 V6.8 M8 3.2 V6.8" stroke="#7a6420" stroke-width="0.5"/></svg>
<div class="a" style="top:500.79px;font-size:9.65px;line-height:9.65px;color:#e4e5e8;left:1170.80px;"><span class="g">German Government (BKA)</span> <b class="w">(bc1qq)</b></div>
<svg class="a" style="left:1521.0px;top:498.91px" width="11" height="11" viewBox="0 0 11 11"><circle cx="5.5" cy="5.5" r="5.2" fill="#1652f0"/><path d="M7.6 4.3 A2.4 2.4 0 1 0 7.6 6.7" fill="none" stroke="#fff" stroke-width="1.6"/></svg>
<div class="a" style="top:500.79px;font-size:9.65px;line-height:9.65px;color:#e4e5e8;left:1534.30px;"><b class="w">Coinbase (3EHqw)</b></div>
<div class="a" style="top:500.79px;font-size:9.65px;line-height:9.65px;color:#b83a55;right:126.00px;">200</div>
<div class="a btc" style="left:1930.8px;top:499.01px;width:10.5px;height:10.5px"><svg viewBox="0 0 10 10"><path d="M4 2.9 H5.7 Q6.8 2.9 6.8 4 Q6.8 4.9 5.9 5 Q7.1 5.1 7.1 6.2 Q7.1 7.3 5.8 7.3 H4 Z M4 5 H5.8 M4.9 2.1 V2.9 M4.9 7.3 V8.1" fill="none" stroke="#ffe6c0" stroke-width="0.9" opacity="0.75"/></svg></div>
<div class="a" style="top:500.79px;font-size:9.65px;line-height:9.65px;color:#e4e5e8;font-weight:700;left:1944.40px;">BTC</div>
<div class="a" style="top:500.79px;font-size:9.65px;line-height:9.65px;color:#c4c6cb;right:24.00px;">$12.17M</div>
<div class="a btc" style="left:1041.2px;top:532.43px;width:10.5px;height:10.5px"><svg viewBox="0 0 10 10"><path d="M4 2.9 H5.7 Q6.8 2.9 6.8 4 Q6.8 4.9 5.9 5 Q7.1 5.1 7.1 6.2 Q7.1 7.3 5.8 7.3 H4 Z M4 5 H5.8 M4.9 2.1 V2.9 M4.9 7.3 V8.1" fill="none" stroke="#ffe6c0" stroke-width="0.9" opacity="0.75"/></svg></div>
<div class="a" style="top:534.21px;font-size:9.65px;line-height:9.65px;color:#2e6dce;left:1066.60px;">50 minutes ago</div>
<svg class="a" style="left:1157.5px;top:532.33px" width="11" height="11" viewBox="0 0 11 11"><circle cx="5.5" cy="5.5" r="5.3" fill="#d8bc40"/><circle cx="3" cy="8.7" r="1.7" fill="#b04a20"/><circle cx="8" cy="8.7" r="1.7" fill="#b04a20"/><path d="M4.7 1.0 H6.3 L6.5 2.6 L9.0 2.3 L9.1 7.6 L7.0 8.8 L6.4 10.9 H4.6 L4.0 8.8 L1.9 7.6 L2.0 2.3 L4.5 2.6 Z" fill="#050505"/><path d="M3 3.2 V6.8 M8 3.2 V6.8" stroke="#7a6420" stroke-width="0.5"/></svg>
<div class="a" style="top:534.21px;font-size:9.65px;line-height:9.65px;color:#e4e5e8;left:1170.80px;"><span class="g">German Government (BKA)</span> <b class="w">(bc1qq)</b></div>
<svg class="a" style="left:1521.0px;top:532.33px" width="11" height="11" viewBox="0 0 11 11"><circle cx="5.5" cy="5.5" r="5.2" fill="#5a45de"/><path d="M2.4 7 V5.6 A3.1 3.1 0 0 1 8.6 5.6 V7 Z" fill="#ece8ff"/></svg>
<div class="a" style="top:534.21px;font-size:9.65px;line-height:9.65px;color:#e4e5e8;left:1534.30px;"><b class="w">Kraken: Kraken Deposit (3GrFP)</b></div>
<div class="a" style="top:534.21px;font-size:9.65px;line-height:9.65px;color:#b83a55;right:126.00px;">200</div>
<div class="a btc" style="left:1930.8px;top:532.43px;width:10.5px;height:10.5px"><svg viewBox="0 0 10 10"><path d="M4 2.9 H5.7 Q6.8 2.9 6.8 4 Q6.8 4.9 5.9 5 Q7.1 5.1 7.1 6.2 Q7.1 7.3 5.8 7.3 H4 Z M4 5 H5.8 M4.9 2.1 V2.9 M4.9 7.3 V8.1" fill="none" stroke="#ffe6c0" stroke-width="0.9" opacity="0.75"/></svg></div>
<div class="a" style="top:534.21px;font-size:9.65px;line-height:9.65px;color:#e4e5e8;font-weight:700;left:1944.40px;">BTC</div>
<div class="a" style="top:534.21px;font-size:9.65px;line-height:9.65px;color:#c4c6cb;right:24.00px;">$12.17M</div>
<div class="a" style="left:1031.5px;top:554.34px;width:997.00px;height:33.42px;background:#1b1e25;border-radius:3px;"></div>
<div class="a btc" style="left:1041.2px;top:565.85px;width:10.5px;height:10.5px"><svg viewBox="0 0 10 10"><path d="M4 2.9 H5.7 Q6.8 2.9 6.8 4 Q6.8 4.9 5.9 5 Q7.1 5.1 7.1 6.2 Q7.1 7.3 5.8 7.3 H4 Z M4 5 H5.8 M4.9 2.1 V2.9 M4.9 7.3 V8.1" fill="none" stroke="#ffe6c0" stroke-width="0.9" opacity="0.75"/></svg></div>
<div class="a" style="top:567.63px;font-size:9.65px;line-height:9.65px;color:#2e6dce;left:1066.60px;">13 hours ago</div>
<div class="a" style="top:567.63px;font-size:9.65px;line-height:9.65px;color:#e4e5e8;left:1157.00px;"><b class="w">bc1qrm05dswkr3x8sa25vs5c7sa69elqenletxsrrx</b></div>
<svg class="a" style="left:1521.0px;top:565.75px" width="11" height="11" viewBox="0 0 11 11"><circle cx="5.5" cy="5.5" r="5.3" fill="#d8bc40"/><circle cx="3" cy="8.7" r="1.7" fill="#b04a20"/><circle cx="8" cy="8.7" r="1.7" fill="#b04a20"/><path d="M4.7 1.0 H6.3 L6.5 2.6 L9.0 2.3 L9.1 7.6 L7.0 8.8 L6.4 10.9 H4.6 L4.0 8.8 L1.9 7.6 L2.0 2.3 L4.5 2.6 Z" fill="#050505"/><path d="M3 3.2 V6.8 M8 3.2 V6.8" stroke="#7a6420" stroke-width="0.5"/></svg>
<div class="a" style="top:567.63px;font-size:9.65px;line-height:9.65px;color:#e4e5e8;left:1534.30px;"><span class="g">German Government (BKA)</span> <b class="w">(bc1qq)</b></div>
<div class="a" style="top:567.63px;font-size:9.65px;line-height:9.65px;color:#3d8e5e;right:126.00px;">5</div>
<div class="a btc" style="left:1930.8px;top:565.85px;width:10.5px;height:10.5px"><svg viewBox="0 0 10 10"><path d="M4 2.9 H5.7 Q6.8 2.9 6.8 4 Q6.8 4.9 5.9 5 Q7.1 5.1 7.1 6.2 Q7.1 7.3 5.8 7.3 H4 Z M4 5 H5.8 M4.9 2.1 V2.9 M4.9 7.3 V8.1" fill="none" stroke="#ffe6c0" stroke-width="0.9" opacity="0.75"/></svg></div>
<div class="a" style="top:567.63px;font-size:9.65px;line-height:9.65px;color:#e4e5e8;font-weight:700;left:1944.40px;">BTC</div>
<div class="a" style="top:567.63px;font-size:9.65px;line-height:9.65px;color:#c4c6cb;right:24.00px;">$300.15K</div>
<div class="a btc" style="left:1041.2px;top:599.27px;width:10.5px;height:10.5px"><svg viewBox="0 0 10 10"><path d="M4 2.9 H5.7 Q6.8 2.9 6.8 4 Q6.8 4.9 5.9 5 Q7.1 5.1 7.1 6.2 Q7.1 7.3 5.8 7.3 H4 Z M4 5 H5.8 M4.9 2.1 V2.9 M4.9 7.3 V8.1" fill="none" stroke="#ffe6c0" stroke-width="0.9" opacity="0.75"/></svg></div>
<div class="a" style="top:601.05px;font-size:9.65px;line-height:9.65px;color:#2e6dce;left:1066.60px;">13 hours ago</div>
<div class="a" style="top:601.05px;font-size:9.65px;line-height:9.65px;color:#e4e5e8;left:1157.00px;"><b class="w">1KTCQyzvqTgxNsFm92xCDmpvfePPSM7E8s</b></div>
<svg class="a" style="left:1521.0px;top:599.17px" width="11" height="11" viewBox="0 0 11 11"><circle cx="5.5" cy="5.5" r="5.3" fill="#d8bc40"/><circle cx="3" cy="8.7" r="1.7" fill="#b04a20"/><circle cx="8" cy="8.7" r="1.7" fill="#b04a20"/><path d="M4.7 1.0 H6.3 L6.5 2.6 L9.0 2.3 L9.1 7.6 L7.0 8.8 L6.4 10.9 H4.6 L4.0 8.8 L1.9 7.6 L2.0 2.3 L4.5 2.6 Z" fill="#050505"/><path d="M3 3.2 V6.8 M8 3.2 V6.8" stroke="#7a6420" stroke-width="0.5"/></svg>
<div class="a" style="top:601.05px;font-size:9.65px;line-height:9.65px;color:#e4e5e8;left:1534.30px;"><span class="g">German Government (BKA)</span> <b class="w">(bc1qq)</b></div>
<div class="a" style="top:601.05px;font-size:9.65px;line-height:9.65px;color:#3d8e5e;right:126.00px;">75</div>
<div class="a btc" style="left:1930.8px;top:599.27px;width:10.5px;height:10.5px"><svg viewBox="0 0 10 10"><path d="M4 2.9 H5.7 Q6.8 2.9 6.8 4 Q6.8 4.9 5.9 5 Q7.1 5.1 7.1 6.2 Q7.1 7.3 5.8 7.3 H4 Z M4 5 H5.8 M4.9 2.1 V2.9 M4.9 7.3 V8.1" fill="none" stroke="#ffe6c0" stroke-width="0.9" opacity="0.75"/></svg></div>
<div class="a" style="top:601.05px;font-size:9.65px;line-height:9.65px;color:#e4e5e8;font-weight:700;left:1944.40px;">BTC</div>
<div class="a" style="top:601.05px;font-size:9.65px;line-height:9.65px;color:#c4c6cb;right:24.00px;">$4.50M</div>
<div class="a" style="left:1031.5px;top:621.18px;width:997.00px;height:33.42px;background:#1b1e25;border-radius:3px;"></div>
<div class="a btc" style="left:1041.2px;top:632.69px;width:10.5px;height:10.5px"><svg viewBox="0 0 10 10"><path d="M4 2.9 H5.7 Q6.8 2.9 6.8 4 Q6.8 4.9 5.9 5 Q7.1 5.1 7.1 6.2 Q7.1 7.3 5.8 7.3 H4 Z M4 5 H5.8 M4.9 2.1 V2.9 M4.9 7.3 V8.1" fill="none" stroke="#ffe6c0" stroke-width="0.9" opacity="0.75"/></svg></div>
<div class="a" style="top:634.47px;font-size:9.65px;line-height:9.65px;color:#2e6dce;left:1066.60px;">5 days ago</div>
<svg class="a" style="left:1157.5px;top:632.59px" width="11" height="11" viewBox="0 0 11 11"><circle cx="5.5" cy="5.5" r="5.2" fill="#5a45de"/><path d="M2.4 7 V5.6 A3.1 3.1 0 0 1 8.6 5.6 V7 Z" fill="#ece8ff"/></svg>
<div class="a" style="top:634.47px;font-size:9.65px;line-height:9.65px;color:#e4e5e8;left:1170.80px;"><b class="w">Kraken: Kraken Deposit (3GrFP)</b> <span class="g2">(+2)</span></div>
<svg class="a" style="left:1521.0px;top:632.59px" width="11" height="11" viewBox="0 0 11 11"><circle cx="5.5" cy="5.5" r="5.3" fill="#d8bc40"/><circle cx="3" cy="8.7" r="1.7" fill="#b04a20"/><circle cx="8" cy="8.7" r="1.7" fill="#b04a20"/><path d="M4.7 1.0 H6.3 L6.5 2.6 L9.0 2.3 L9.1 7.6 L7.0 8.8 L6.4 10.9 H4.6 L4.0 8.8 L1.9 7.6 L2.0 2.3 L4.5 2.6 Z" fill="#050505"/><path d="M3 3.2 V6.8 M8 3.2 V6.8" stroke="#7a6420" stroke-width="0.5"/></svg>
<div class="a" style="top:634.47px;font-size:9.65px;line-height:9.65px;color:#e4e5e8;left:1534.30px;"><span class="g">German Government (BKA)</span> <b class="w">(bc1qq)</b></div>
<div class="a" style="top:634.47px;font-size:9.65px;line-height:9.65px;color:#3d8e5e;right:126.00px;">300</div>
<div class="a btc" style="left:1930.8px;top:632.69px;width:10.5px;height:10.5px"><svg viewBox="0 0 10 10"><path d="M4 2.9 H5.7 Q6.8 2.9 6.8 4 Q6.8 4.9 5.9 5 Q7.1 5.1 7.1 6.2 Q7.1 7.3 5.8 7.3 H4 Z M4 5 H5.8 M4.9 2.1 V2.9 M4.9 7.3 V8.1" fill="none" stroke="#ffe6c0" stroke-width="0.9" opacity="0.75"/></svg></div>
<div class="a" style="top:634.47px;font-size:9.65px;line-height:9.65px;color:#e4e5e8;font-weight:700;left:1944.40px;">BTC</div>
<div class="a" style="top:634.47px;font-size:9.65px;line-height:9.65px;color:#c4c6cb;right:24.00px;">$19.48M</div>
<div class="a btc" style="left:1041.2px;top:666.11px;width:10.5px;height:10.5px"><svg viewBox="0 0 10 10"><path d="M4 2.9 H5.7 Q6.8 2.9 6.8 4 Q6.8 4.9 5.9 5 Q7.1 5.1 7.1 6.2 Q7.1 7.3 5.8 7.3 H4 Z M4 5 H5.8 M4.9 2.1 V2.9 M4.9 7.3 V8.1" fill="none" stroke="#ffe6c0" stroke-width="0.9" opacity="0.75"/></svg></div>
<div class="a" style="top:667.89px;font-size:9.65px;line-height:9.65px;color:#2e6dce;left:1066.60px;">5 days ago</div>
<div class="a" style="top:667.89px;font-size:9.65px;line-height:9.65px;color:#e4e5e8;left:1157.00px;"><b class="w">bc1qulc6d7azlt4ph89djhfwgkje3akgtqnd32lw5d7veget2p9ujydsgparj8</b></div>
<svg class="a" style="left:1521.0px;top:666.01px" width="11" height="11" viewBox="0 0 11 11"><circle cx="5.5" cy="5.5" r="5.3" fill="#d8bc40"/><circle cx="3" cy="8.7" r="1.7" fill="#b04a20"/><circle cx="8" cy="8.7" r="1.7" fill="#b04a20"/><path d="M4.7 1.0 H6.3 L6.5 2.6 L9.0 2.3 L9.1 7.6 L7.0 8.8 L6.4 10.9 H4.6 L4.0 8.8 L1.9 7.6 L2.0 2.3 L4.5 2.6 Z" fill="#050505"/><path d="M3 3.2 V6.8 M8 3.2 V6.8" stroke="#7a6420" stroke-width="0.5"/></svg>
<div class="a" style="top:667.89px;font-size:9.65px;line-height:9.65px;color:#e4e5e8;left:1534.30px;"><span class="g">German Government (BKA)</span> <b class="w">(bc1qq)</b></div>
<div class="a" style="top:667.89px;font-size:9.65px;line-height:9.65px;color:#3d8e5e;right:126.00px;">10</div>
<div class="a btc" style="left:1930.8px;top:666.11px;width:10.5px;height:10.5px"><svg viewBox="0 0 10 10"><path d="M4 2.9 H5.7 Q6.8 2.9 6.8 4 Q6.8 4.9 5.9 5 Q7.1 5.1 7.1 6.2 Q7.1 7.3 5.8 7.3 H4 Z M4 5 H5.8 M4.9 2.1 V2.9 M4.9 7.3 V8.1" fill="none" stroke="#ffe6c0" stroke-width="0.9" opacity="0.75"/></svg></div>
<div class="a" style="top:667.89px;font-size:9.65px;line-height:9.65px;color:#e4e5e8;font-weight:700;left:1944.40px;">BTC</div>
<div class="a" style="top:667.89px;font-size:9.65px;line-height:9.65px;color:#c4c6cb;right:24.00px;">$647.79K</div>
<div class="a" style="left:1031.5px;top:688.02px;width:997.00px;height:33.42px;background:#1b1e25;border-radius:3px;"></div>
<div class="a btc" style="left:1041.2px;top:699.53px;width:10.5px;height:10.5px"><svg viewBox="0 0 10 10"><path d="M4 2.9 H5.7 Q6.8 2.9 6.8 4 Q6.8 4.9 5.9 5 Q7.1 5.1 7.1 6.2 Q7.1 7.3 5.8 7.3 H4 Z M4 5 H5.8 M4.9 2.1 V2.9 M4.9 7.3 V8.1" fill="none" stroke="#ffe6c0" stroke-width="0.9" opacity="0.75"/></svg></div>
<div class="a" style="top:701.31px;font-size:9.65px;line-height:9.65px;color:#2e6dce;left:1066.60px;">5 days ago</div>
<svg class="a" style="left:1157.5px;top:699.43px" width="11" height="11" viewBox="0 0 11 11"><circle cx="5.5" cy="5.5" r="5.2" fill="#5a45de"/><path d="M2.4 7 V5.6 A3.1 3.1 0 0 1 8.6 5.6 V7 Z" fill="#ece8ff"/></svg>
<div class="a" style="top:701.31px;font-size:9.65px;line-height:9.65px;color:#e4e5e8;left:1170.80px;"><b class="w">Kraken: Kraken Deposit (3KTQY)</b></div>
<svg class="a" style="left:1521.0px;top:699.43px" width="11" height="11" viewBox="0 0 11 11"><circle cx="5.5" cy="5.5" r="5.3" fill="#d8bc40"/><circle cx="3" cy="8.7" r="1.7" fill="#b04a20"/><circle cx="8" cy="8.7" r="1.7" fill="#b04a20"/><path d="M4.7 1.0 H6.3 L6.5 2.6 L9.0 2.3 L9.1 7.6 L7.0 8.8 L6.4 10.9 H4.6 L4.0 8.8 L1.9 7.6 L2.0 2.3 L4.5 2.6 Z" fill="#050505"/><path d="M3 3.2 V6.8 M8 3.2 V6.8" stroke="#7a6420" stroke-width="0.5"/></svg>
<div class="a" style="top:701.31px;font-size:9.65px;line-height:9.65px;color:#e4e5e8;left:1534.30px;"><span class="g">German Government (BKA)</span> <b class="w">(bc1qq)</b></div>
<div class="a" style="top:701.31px;font-size:9.65px;line-height:9.65px;color:#3d8e5e;right:126.00px;">10</div>
<div class="a btc" style="left:1930.8px;top:699.53px;width:10.5px;height:10.5px"><svg viewBox="0 0 10 10"><path d="M4 2.9 H5.7 Q6.8 2.9 6.8 4 Q6.8 4.9 5.9 5 Q7.1 5.1 7.1 6.2 Q7.1 7.3 5.8 7.3 H4 Z M4 5 H5.8 M4.9 2.1 V2.9 M4.9 7.3 V8.1" fill="none" stroke="#ffe6c0" stroke-width="0.9" opacity="0.75"/></svg></div>
<div class="a" style="top:701.31px;font-size:9.65px;line-height:9.65px;color:#e4e5e8;font-weight:700;left:1944.40px;">BTC</div>
<div class="a" style="top:701.31px;font-size:9.65px;line-height:9.65px;color:#c4c6cb;right:24.00px;">$647.79K</div>
<div class="a btc" style="left:1041.2px;top:732.95px;width:10.5px;height:10.5px"><svg viewBox="0 0 10 10"><path d="M4 2.9 H5.7 Q6.8 2.9 6.8 4 Q6.8 4.9 5.9 5 Q7.1 5.1 7.1 6.2 Q7.1 7.3 5.8 7.3 H4 Z M4 5 H5.8 M4.9 2.1 V2.9 M4.9 7.3 V8.1" fill="none" stroke="#ffe6c0" stroke-width="0.9" opacity="0.75"/></svg></div>
<div class="a" style="top:734.73px;font-size:9.65px;line-height:9.65px;color:#2e6dce;left:1066.60px;">5 days ago</div>
<svg class="a" style="left:1157.5px;top:732.85px" width="11" height="11" viewBox="0 0 11 11"><circle cx="5.5" cy="5.5" r="5.3" fill="#d8bc40"/><circle cx="3" cy="8.7" r="1.7" fill="#b04a20"/><circle cx="8" cy="8.7" r="1.7" fill="#b04a20"/><path d="M4.7 1.0 H6.3 L6.5 2.6 L9.0 2.3 L9.1 7.6 L7.0 8.8 L6.4 10.9 H4.6 L4.0 8.8 L1.9 7.6 L2.0 2.3 L4.5 2.6 Z" fill="#050505"/><path d="M3 3.2 V6.8 M8 3.2 V6.8" stroke="#7a6420" stroke-width="0.5"/></svg>
<div class="a" style="top:734.73px;font-size:9.65px;line-height:9.65px;color:#e4e5e8;left:1170.80px;"><span class="g">German Government (BKA)</span> <b class="w">(bc1qq)</b></div>
<div class="a" style="top:734.73px;font-size:9.65px;line-height:9.65px;color:#e4e5e8;left:1520.50px;"><b class="w">139PoPE1bKQam8QJjhVjYDP47f3VH7ybVu</b></div>
<div class="a" style="top:734.73px;font-size:9.65px;line-height:9.65px;color:#b83a55;right:126.00px;">800</div>
<div class="a btc" style="left:1930.8px;top:732.95px;width:10.5px;height:10.5px"><svg viewBox="0 0 10 10"><path d="M4 2.9 H5.7 Q6.8 2.9 6.8 4 Q6.8 4.9 5.9 5 Q7.1 5.1 7.1 6.2 Q7.1 7.3 5.8 7.3 H4 Z M4 5 H5.8 M4.9 2.1 V2.9 M4.9 7.3 V8.1" fill="none" stroke="#ffe6c0" stroke-width="0.9" opacity="0.75"/></svg></div>
<div class="a" style="top:734.73px;font-size:9.65px;line-height:9.65px;color:#e4e5e8;font-weight:700;left:1944.40px;">BTC</div>
<div class="a" style="top:734.73px;font-size:9.65px;line-height:9.65px;color:#c4c6cb;right:24.00px;">$52.65M</div>
<div class="a" style="left:1031.5px;top:754.86px;width:997.00px;height:33.42px;background:#1b1e25;border-radius:3px;"></div>
<div class="a btc" style="left:1041.2px;top:766.37px;width:10.5px;height:10.5px"><svg viewBox="0 0 10 10"><path d="M4 2.9 H5.7 Q6.8 2.9 6.8 4 Q6.8 4.9 5.9 5 Q7.1 5.1 7.1 6.2 Q7.1 7.3 5.8 7.3 H4 Z M4 5 H5.8 M4.9 2.1 V2.9 M4.9 7.3 V8.1" fill="none" stroke="#ffe6c0" stroke-width="0.9" opacity="0.75"/></svg></div>
<div class="a" style="top:768.15px;font-size:9.65px;line-height:9.65px;color:#2e6dce;left:1066.60px;">5 days ago</div>
<svg class="a" style="left:1157.5px;top:766.27px" width="11" height="11" viewBox="0 0 11 11"><circle cx="5.5" cy="5.5" r="5.3" fill="#d8bc40"/><circle cx="3" cy="8.7" r="1.7" fill="#b04a20"/><circle cx="8" cy="8.7" r="1.7" fill="#b04a20"/><path d="M4.7 1.0 H6.3 L6.5 2.6 L9.0 2.3 L9.1 7.6 L7.0 8.8 L6.4 10.9 H4.6 L4.0 8.8 L1.9 7.6 L2.0 2.3 L4.5 2.6 Z" fill="#050505"/><path d="M3 3.2 V6.8 M8 3.2 V6.8" stroke="#7a6420" stroke-width="0.5"/></svg>
<div class="a" style="top:768.15px;font-size:9.65px;line-height:9.65px;color:#e4e5e8;left:1170.80px;"><span class="g">German Government (BKA)</span> <b class="w">(bc1qq)</b></div>
<svg class="a" style="left:1521.0px;top:766.27px" width="11" height="11" viewBox="0 0 11 11"><circle cx="5.5" cy="5.5" r="5.2" fill="#1652f0"/><path d="M7.6 4.3 A2.4 2.4 0 1 0 7.6 6.7" fill="none" stroke="#fff" stroke-width="1.6"/></svg>
<div class="a" style="top:768.15px;font-size:9.65px;line-height:9.65px;color:#e4e5e8;left:1534.30px;"><b class="w">Coinbase (3EHqw)</b></div>
<div class="a" style="top:768.15px;font-size:9.65px;line-height:9.65px;color:#b83a55;right:126.00px;">200</div>
<div class="a btc" style="left:1930.8px;top:766.37px;width:10.5px;height:10.5px"><svg viewBox="0 0 10 10"><path d="M4 2.9 H5.7 Q6.8 2.9 6.8 4 Q6.8 4.9 5.9 5 Q7.1 5.1 7.1 6.2 Q7.1 7.3 5.8 7.3 H4 Z M4 5 H5.8 M4.9 2.1 V2.9 M4.9 7.3 V8.1" fill="none" stroke="#ffe6c0" stroke-width="0.9" opacity="0.75"/></svg></div>
<div class="a" style="top:768.15px;font-size:9.65px;line-height:9.65px;color:#e4e5e8;font-weight:700;left:1944.40px;">BTC</div>
<div class="a" style="top:768.15px;font-size:9.65px;line-height:9.65px;color:#c4c6cb;right:24.00px;">$13.16M</div>
<div class="a btc" style="left:1041.2px;top:799.79px;width:10.5px;height:10.5px"><svg viewBox="0 0 10 10"><path d="M4 2.9 H5.7 Q6.8 2.9 6.8 4 Q6.8 4.9 5.9 5 Q7.1 5.1 7.1 6.2 Q7.1 7.3 5.8 7.3 H4 Z M4 5 H5.8 M4.9 2.1 V2.9 M4.9 7.3 V8.1" fill="none" stroke="#ffe6c0" stroke-width="0.9" opacity="0.75"/></svg></div>
<div class="a" style="top:801.57px;font-size:9.65px;line-height:9.65px;color:#2e6dce;left:1066.60px;">5 days ago</div>
<div class="a" style="top:801.57px;font-size:9.65px;line-height:9.65px;color:#e4e5e8;left:1157.00px;"><b class="w">139y6VcXR1Y6x2LQCvaY8KHJYtAFo2ybVu</b></div>
<svg class="a" style="left:1521.0px;top:799.69px" width="11" height="11" viewBox="0 0 11 11"><circle cx="5.5" cy="5.5" r="5.3" fill="#d8bc40"/><circle cx="3" cy="8.7" r="1.7" fill="#b04a20"/><circle cx="8" cy="8.7" r="1.7" fill="#b04a20"/><path d="M4.7 1.0 H6.3 L6.5 2.6 L9.0 2.3 L9.1 7.6 L7.0 8.8 L6.4 10.9 H4.6 L4.0 8.8 L1.9 7.6 L2.0 2.3 L4.5 2.6 Z" fill="#050505"/><path d="M3 3.2 V6.8 M8 3.2 V6.8" stroke="#7a6420" stroke-width="0.5"/></svg>
<div class="a" style="top:801.57px;font-size:9.65px;line-height:9.65px;color:#e4e5e8;left:1534.30px;"><span class="g">German Government (BKA)</span> <b class="w">(bc1qq)</b></div>
<div class="a" style="top:801.57px;font-size:9.65px;line-height:9.65px;color:#3d8e5e;right:126.00px;">0</div>
<div class="a btc" style="left:1930.8px;top:799.79px;width:10.5px;height:10.5px"><svg viewBox="0 0 10 10"><path d="M4 2.9 H5.7 Q6.8 2.9 6.8 4 Q6.8 4.9 5.9 5 Q7.1 5.1 7.1 6.2 Q7.1 7.3 5.8 7.3 H4 Z M4 5 H5.8 M4.9 2.1 V2.9 M4.9 7.3 V8.1" fill="none" stroke="#ffe6c0" stroke-width="0.9" opacity="0.75"/></svg></div>
<div class="a" style="top:801.57px;font-size:9.65px;line-height:9.65px;color:#e4e5e8;font-weight:700;left:1944.40px;">BTC</div>
<div class="a" style="top:801.57px;font-size:9.65px;line-height:9.65px;color:#c4c6cb;right:24.00px;">$0.39</div>
<div class="a" style="left:1031.5px;top:821.7px;width:997.00px;height:33.42px;background:#1b1e25;border-radius:3px;"></div>
<div class="a btc" style="left:1041.2px;top:833.21px;width:10.5px;height:10.5px"><svg viewBox="0 0 10 10"><path d="M4 2.9 H5.7 Q6.8 2.9 6.8 4 Q6.8 4.9 5.9 5 Q7.1 5.1 7.1 6.2 Q7.1 7.3 5.8 7.3 H4 Z M4 5 H5.8 M4.9 2.1 V2.9 M4.9 7.3 V8.1" fill="none" stroke="#ffe6c0" stroke-width="0.9" opacity="0.75"/></svg></div>
<div class="a" style="top:834.99px;font-size:9.65px;line-height:9.65px;color:#2e6dce;left:1066.60px;">5 days ago</div>
<svg class="a" style="left:1157.5px;top:833.11px" width="11" height="11" viewBox="0 0 11 11"><circle cx="5.5" cy="5.5" r="5.3" fill="#d8bc40"/><circle cx="3" cy="8.7" r="1.7" fill="#b04a20"/><circle cx="8" cy="8.7" r="1.7" fill="#b04a20"/><path d="M4.7 1.0 H6.3 L6.5 2.6 L9.0 2.3 L9.1 7.6 L7.0 8.8 L6.4 10.9 H4.6 L4.0 8.8 L1.9 7.6 L2.0 2.3 L4.5 2.6 Z" fill="#050505"/><path d="M3 3.2 V6.8 M8 3.2 V6.8" stroke="#7a6420" stroke-width="0.5"/></svg>
<div class="a" style="top:834.99px;font-size:9.65px;line-height:9.65px;color:#e4e5e8;left:1170.80px;"><b class="w">German Government (BKA)</b> <span class="g3">(bc1q0)</span></div>
<svg class="a" style="left:1521.0px;top:833.11px" width="11" height="11" viewBox="0 0 11 11"><circle cx="5.5" cy="5.5" r="5.3" fill="#d8bc40"/><circle cx="3" cy="8.7" r="1.7" fill="#b04a20"/><circle cx="8" cy="8.7" r="1.7" fill="#b04a20"/><path d="M4.7 1.0 H6.3 L6.5 2.6 L9.0 2.3 L9.1 7.6 L7.0 8.8 L6.4 10.9 H4.6 L4.0 8.8 L1.9 7.6 L2.0 2.3 L4.5 2.6 Z" fill="#050505"/><path d="M3 3.2 V6.8 M8 3.2 V6.8" stroke="#7a6420" stroke-width="0.5"/></svg>
<div class="a" style="top:834.99px;font-size:9.65px;line-height:9.65px;color:#e4e5e8;left:1534.30px;"><span class="g">German Government (BKA)</span> <b class="w">(bc1qq)</b></div>
<div class="a" style="top:834.99px;font-size:9.65px;line-height:9.65px;color:#3d8e5e;right:126.00px;">1K</div>
<div class="a btc" style="left:1930.8px;top:833.21px;width:10.5px;height:10.5px"><svg viewBox="0 0 10 10"><path d="M4 2.9 H5.7 Q6.8 2.9 6.8 4 Q6.8 4.9 5.9 5 Q7.1 5.1 7.1 6.2 Q7.1 7.3 5.8 7.3 H4 Z M4 5 H5.8 M4.9 2.1 V2.9 M4.9 7.3 V8.1" fill="none" stroke="#ffe6c0" stroke-width="0.9" opacity="0.75"/></svg></div>
<div class="a" style="top:834.99px;font-size:9.65px;line-height:9.65px;color:#e4e5e8;font-weight:700;left:1944.40px;">BTC</div>
<div class="a" style="top:834.99px;font-size:9.65px;line-height:9.65px;color:#c4c6cb;right:24.00px;">$65.96M</div>
<div class="a btc" style="left:1041.2px;top:866.63px;width:10.5px;height:10.5px"><svg viewBox="0 0 10 10"><path d="M4 2.9 H5.7 Q6.8 2.9 6.8 4 Q6.8 4.9 5.9 5 Q7.1 5.1 7.1 6.2 Q7.1 7.3 5.8 7.3 H4 Z M4 5 H5.8 M4.9 2.1 V2.9 M4.9 7.3 V8.1" fill="none" stroke="#ffe6c0" stroke-width="0.9" opacity="0.75"/></svg></div>
<div class="a" style="top:868.41px;font-size:9.65px;line-height:9.65px;color:#2e6dce;left:1066.60px;">5 days ago</div>
<svg class="a" style="left:1157.5px;top:866.53px" width="11" height="11" viewBox="0 0 11 11"><circle cx="5.5" cy="5.5" r="5.3" fill="#d8bc40"/><circle cx="3" cy="8.7" r="1.7" fill="#b04a20"/><circle cx="8" cy="8.7" r="1.7" fill="#b04a20"/><path d="M4.7 1.0 H6.3 L6.5 2.6 L9.0 2.3 L9.1 7.6 L7.0 8.8 L6.4 10.9 H4.6 L4.0 8.8 L1.9 7.6 L2.0 2.3 L4.5 2.6 Z" fill="#050505"/><path d="M3 3.2 V6.8 M8 3.2 V6.8" stroke="#7a6420" stroke-width="0.5"/></svg>
<div class="a" style="top:868.41px;font-size:9.65px;line-height:9.65px;color:#e4e5e8;left:1170.80px;"><span class="g">German Government (BKA)</span> <b class="w">(bc1q0)</b></div>
<svg class="a" style="left:1521.0px;top:866.53px" width="11" height="11" viewBox="0 0 11 11"><circle cx="5.5" cy="5.5" r="5.3" fill="#d8bc40"/><circle cx="3" cy="8.7" r="1.7" fill="#b04a20"/><circle cx="8" cy="8.7" r="1.7" fill="#b04a20"/><path d="M4.7 1.0 H6.3 L6.5 2.6 L9.0 2.3 L9.1 7.6 L7.0 8.8 L6.4 10.9 H4.6 L4.0 8.8 L1.9 7.6 L2.0 2.3 L4.5 2.6 Z" fill="#050505"/><path d="M3 3.2 V6.8 M8 3.2 V6.8" stroke="#7a6420" stroke-width="0.5"/></svg>
<div class="a" style="top:868.41px;font-size:9.65px;line-height:9.65px;color:#e4e5e8;left:1534.30px;"><b class="w">German Government (BKA)</b> <span class="g3">(bc1qq)</span></div>
<div class="a" style="top:868.41px;font-size:9.65px;line-height:9.65px;color:#b83a55;right:126.00px;">1K</div>
<div class="a btc" style="left:1930.8px;top:866.63px;width:10.5px;height:10.5px"><svg viewBox="0 0 10 10"><path d="M4 2.9 H5.7 Q6.8 2.9 6.8 4 Q6.8 4.9 5.9 5 Q7.1 5.1 7.1 6.2 Q7.1 7.3 5.8 7.3 H4 Z M4 5 H5.8 M4.9 2.1 V2.9 M4.9 7.3 V8.1" fill="none" stroke="#ffe6c0" stroke-width="0.9" opacity="0.75"/></svg></div>
<div class="a" style="top:868.41px;font-size:9.65px;line-height:9.65px;color:#e4e5e8;font-weight:700;left:1944.40px;">BTC</div>
<div class="a" style="top:868.41px;font-size:9.65px;line-height:9.65px;color:#c4c6cb;right:24.00px;">$65.96M</div>
<svg class="a" style="left:0;top:0;" width="2048" height="895" viewBox="0 0 2048 895"><path d="M1438.7,700.5 L1469.3,700.5 L1478.7,729.5 L1454.0,747.5 L1429.3,729.5 Z M1454.0,715.8 L1459.4,719.7 L1457.4,726.1 L1450.6,726.1 L1448.6,719.7 Z" fill="rgba(255,255,255,0.03)" fill-rule="evenodd"/><path d="M1454.0,715.8 L1466.6,703.1 M1459.4,719.7 L1475.4,727.8 M1457.4,726.1 L1454.6,743.8 M1450.6,726.1 L1433.0,728.9 M1448.6,719.7 L1440.4,703.8 " stroke="rgba(0,0,0,0)" stroke-width="1.0" opacity="0.8"/><path d="M1438.7,707.7 H1469.3" stroke="rgba(0,0,0,0)" stroke-width="1.0" opacity="0.8"/></svg>
<div class="a" style="top:707.26px;font-size:39px;line-height:39px;color:rgba(255,255,255,0.03);font-weight:700;left:1489.00px;font-family:"Liberation Sans",sans-serif;transform-origin:0 50%;transform:scaleX(0.805);">ARKHAM</div>
<div class="a" style="left:1031.5px;top:888.54px;width:997.00px;height:6.46px;background:#1b1e25;border-radius:3px;"></div>
<div class="a" style="left:0px;top:892px;width:2048.00px;height:1.20px;background:#3a3e47;"></div>
</body></html>
